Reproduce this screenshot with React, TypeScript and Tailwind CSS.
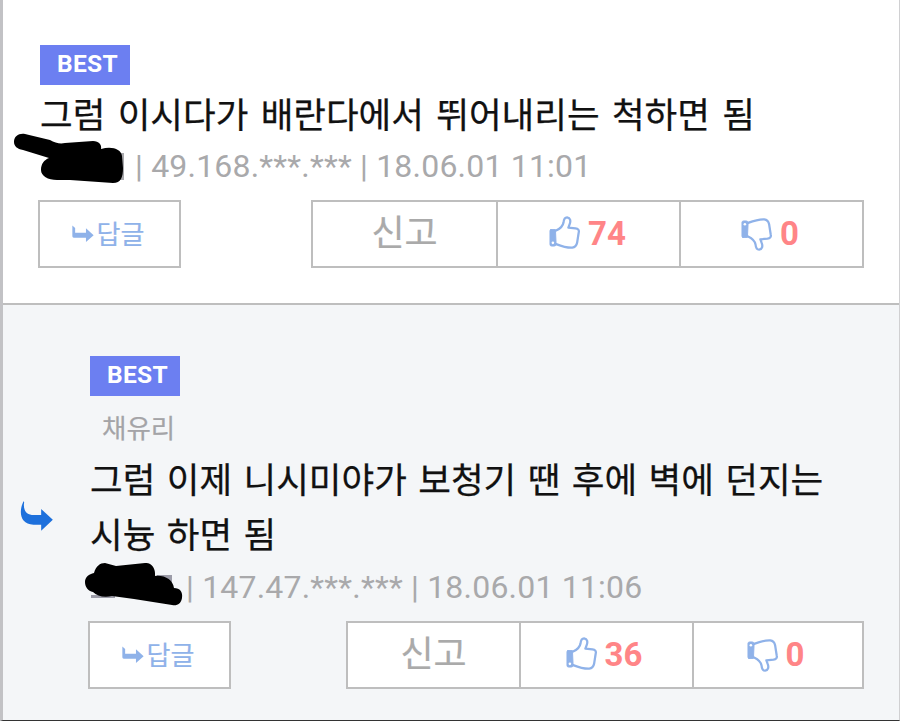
import React from 'react';
import clsx from 'clsx';

interface CommentData {
  text: string[];
  ip: string;
  date: string;
  likes: number;
  dislikes: number;
  mention?: string;
  isReply?: boolean;
}

const comments: CommentData[] = [
  {
    text: ['그럼 이시다가 배란다에서 뛰어내리는 척하면 됨'],
    ip: '49.168.***.***',
    date: '18.06.01 11:01',
    likes: 74,
    dislikes: 0,
  },
  {
    text: ['그럼 이제 니시미야가 보청기 땐 후에 벽에 던지는', '시늉 하면 됨'],
    ip: '147.47.***.***',
    date: '18.06.01 11:06',
    likes: 36,
    dislikes: 0,
    mention: '채유리',
    isReply: true,
  },
];

const Thumb = ({ down }: { down?: boolean }) => (
  <svg
    viewBox="0 0 96 102"
    className={clsx('h-[33px] w-[31px] shrink-0', down ? '-scale-y-100' : '-mt-1')}
    fill="none"
    stroke="#8fb2e9"
    strokeWidth="7"
    strokeLinejoin="round"
    strokeLinecap="round"
  >
    <path d="M22 45 C35 39 43 31 45 20 C46 9 50 4 56 4 C66 5 68 15 64 25 L60 36 L82 38 C90 39 94 44 92 51 L87 83 C85 93 81 97 72 98 C53 99 40 94 22 87" />
    <path d="M6 42 L20 42 L22 87 Q22 93 16 93 L8 93 Q3 93 3 88 L3 46 Q3 42 6 42 Z" fill="#8fb2e9" strokeWidth="3" />
    <circle cx="12" cy="83" r="4" fill="#fff" stroke="none" />
  </svg>
);

const ReplyArrow = () => (
  <svg viewBox="0 0 63 48" className="-mt-px h-[17px] w-[22px]" fill="#8fb2e9">
    <path d="M1 1 L9 8 V22 H40 V9 L62 29 L40 48 V36 H5 Q1 36 1 32 Z" />
  </svg>
);

const NestArrow = () => (
  <svg viewBox="0 0 98 90" className="h-[30px] w-[33px]" fill="#1d70dc">
    <path d="M10 1 C-5 32 -1 70 40 71 H63 V89 L98 56 L63 24 V42 H43 C18 43 8 27 12 3 Z" />
  </svg>
);

// marker strokes hiding the author's name
const Scribble = ({ isReply }: { isReply?: boolean }) =>
  isReply ? (
    <svg viewBox="80 560 110 50" className="absolute -left-2.5 -top-2 h-[50px] w-[110px]">
      <path d="M157 575h15v8h-15zM91 595h24v3h-24z" fill="#9c9ca8" />
      <path
        d="M85 582 C85 577 89 574 94 573 C96 566 100 563 105 563 L116 566 L145 563 C151 562 156 568 155 576 C165 575 173 580 174 588 C180 588 183 592 182 598 C181 604 177 606 172 605 L134 599 L112 596 C104 598 97 596 93 592 C88 591 85 587 85 582 Z"
        fill="#000"
      />
    </svg>
  ) : (
    <svg viewBox="10 130 120 60" className="absolute -left-[30px] -top-[17px] h-[60px] w-[120px]">
      <path d="M120 153h4v27h-4z" fill="#a9a9ad" />
      <path
        d="M14 142 C14 136 19 133 25 134 L50 140 C55 143 60 144 65 143 L93 141 C99 141 102 145 101 149 C112 146 121 149 122 156 L123 168 C123 177 121 183 113 183 L70 180 L57 180 C48 180 41 176 41 170 C41 164 44 160 49 158 L23 150 C17 149 14 146 14 142 Z"
        fill="#000"
      />
    </svg>
  );

const Votes = ({ comment }: { comment: CommentData }) => {
  const cell = 'flex items-center justify-center border-l-2 border-[#bebebe]';
  return (
    <div
      className={clsx(
        'grid h-[68px] border-2 border-[#bebebe] bg-white text-[33px] font-bold text-[#ff8587]',
        comment.isReply
          ? 'w-[518px] grid-cols-[171px_173px_170px]'
          : 'w-[553px] grid-cols-[183px_183px_183px]'
      )}
    >
      <button className="pb-[9px] font-['Noto_Sans_CJK_KR',sans-serif] text-[36px] leading-none font-normal text-[#aaa] [-webkit-text-stroke:0.2px]">
        신고
      </button>
      <button className={clsx(cell, 'gap-2', comment.isReply ? 'pr-[5px]' : 'pr-[2px]')}>
        <Thumb />
        {comment.likes}
      </button>
      <button className={clsx(cell, 'gap-2', comment.isReply ? 'pr-[5px]' : 'pr-[3px]')}>
        <Thumb down />
        {comment.dislikes}
      </button>
    </div>
  );
};

const Comment = ({ comment }: { comment: CommentData }) => {
  const { isReply } = comment;
  return (
    <article
      className={clsx(
        'flex',
        isReply ? 'h-[416px] bg-[#f4f6f8] pt-[51px]' : 'h-[305px] border-b-2 border-[#bebebe] bg-white pt-[45px]'
      )}
    >
      <div className={clsx('shrink-0', isReply ? 'w-[87px] pt-[145px] pl-[17px]' : 'w-[37px]')}>
        {isReply && <NestArrow />}
      </div>
      <div className="min-w-0 flex-1">
        <div className="flex h-10 w-[90px] items-center bg-[#6c7ff1] pb-0.5 pl-[17px] text-[24.5px] font-bold tracking-[0.3px] text-white">
          BEST
        </div>
        {comment.mention && (
          <p className="ml-[12px] mt-[13px] h-9 font-['Noto_Sans_CJK_KR',sans-serif] text-[26.5px] leading-9 text-[#a4a4a7] [-webkit-text-stroke:0.2px]">
            {comment.mention}
          </p>
        )}
        <div
          className={clsx(
            "font-['Noto_Sans_CJK_KR',sans-serif] text-[35.5px] leading-[55px] whitespace-nowrap text-[#111] [-webkit-text-stroke:0.25px]",
            isReply ? 'mt-[5px] [word-spacing:1.5px]' : 'mt-0 [word-spacing:2.4px]'
          )}
        >
          {comment.text.map((line) => (
            <p key={line}>{line}</p>
          ))}
        </div>
        <div
          className={clsx(
            'relative flex h-[38px] items-center text-[32px] tracking-[0.2px] whitespace-nowrap text-[#a9a9ab]',
            isReply ? 'mt-2 pl-[96px]' : 'mt-[7px] pl-[95px]'
          )}
        >
          <Scribble isReply={isReply} />
          <span>
            | {comment.ip} | {comment.date}
          </span>
        </div>
        <div className="mt-[15px] flex justify-between pr-[35px]">
          <button className="ml-[-2px] flex h-[68px] w-[143px] items-center justify-center gap-[3px] border-2 border-[#bebebe] bg-white pr-[3px] font-['Noto_Sans_CJK_KR',sans-serif] text-[26px] text-[#8fb2e9] [-webkit-text-stroke:0.2px]">
            <ReplyArrow />
            <span className="-mt-0.5 leading-none">답글</span>
          </button>
          <Votes comment={comment} />
        </div>
      </div>
    </article>
  );
};

export default function App() {
  return (
    <main
      lang="ko"
      className="h-[721px] w-[900px] overflow-hidden border-r border-b border-l-[3px] border-r-[#d0d0d2] border-b-[#333] border-l-[#c2c2c5] font-[Roboto,'Noto_Sans_CJK_KR',sans-serif]"
    >
      {comments.map((comment) => (
        <Comment key={comment.date} comment={comment} />
      ))}
    </main>
  );
}
